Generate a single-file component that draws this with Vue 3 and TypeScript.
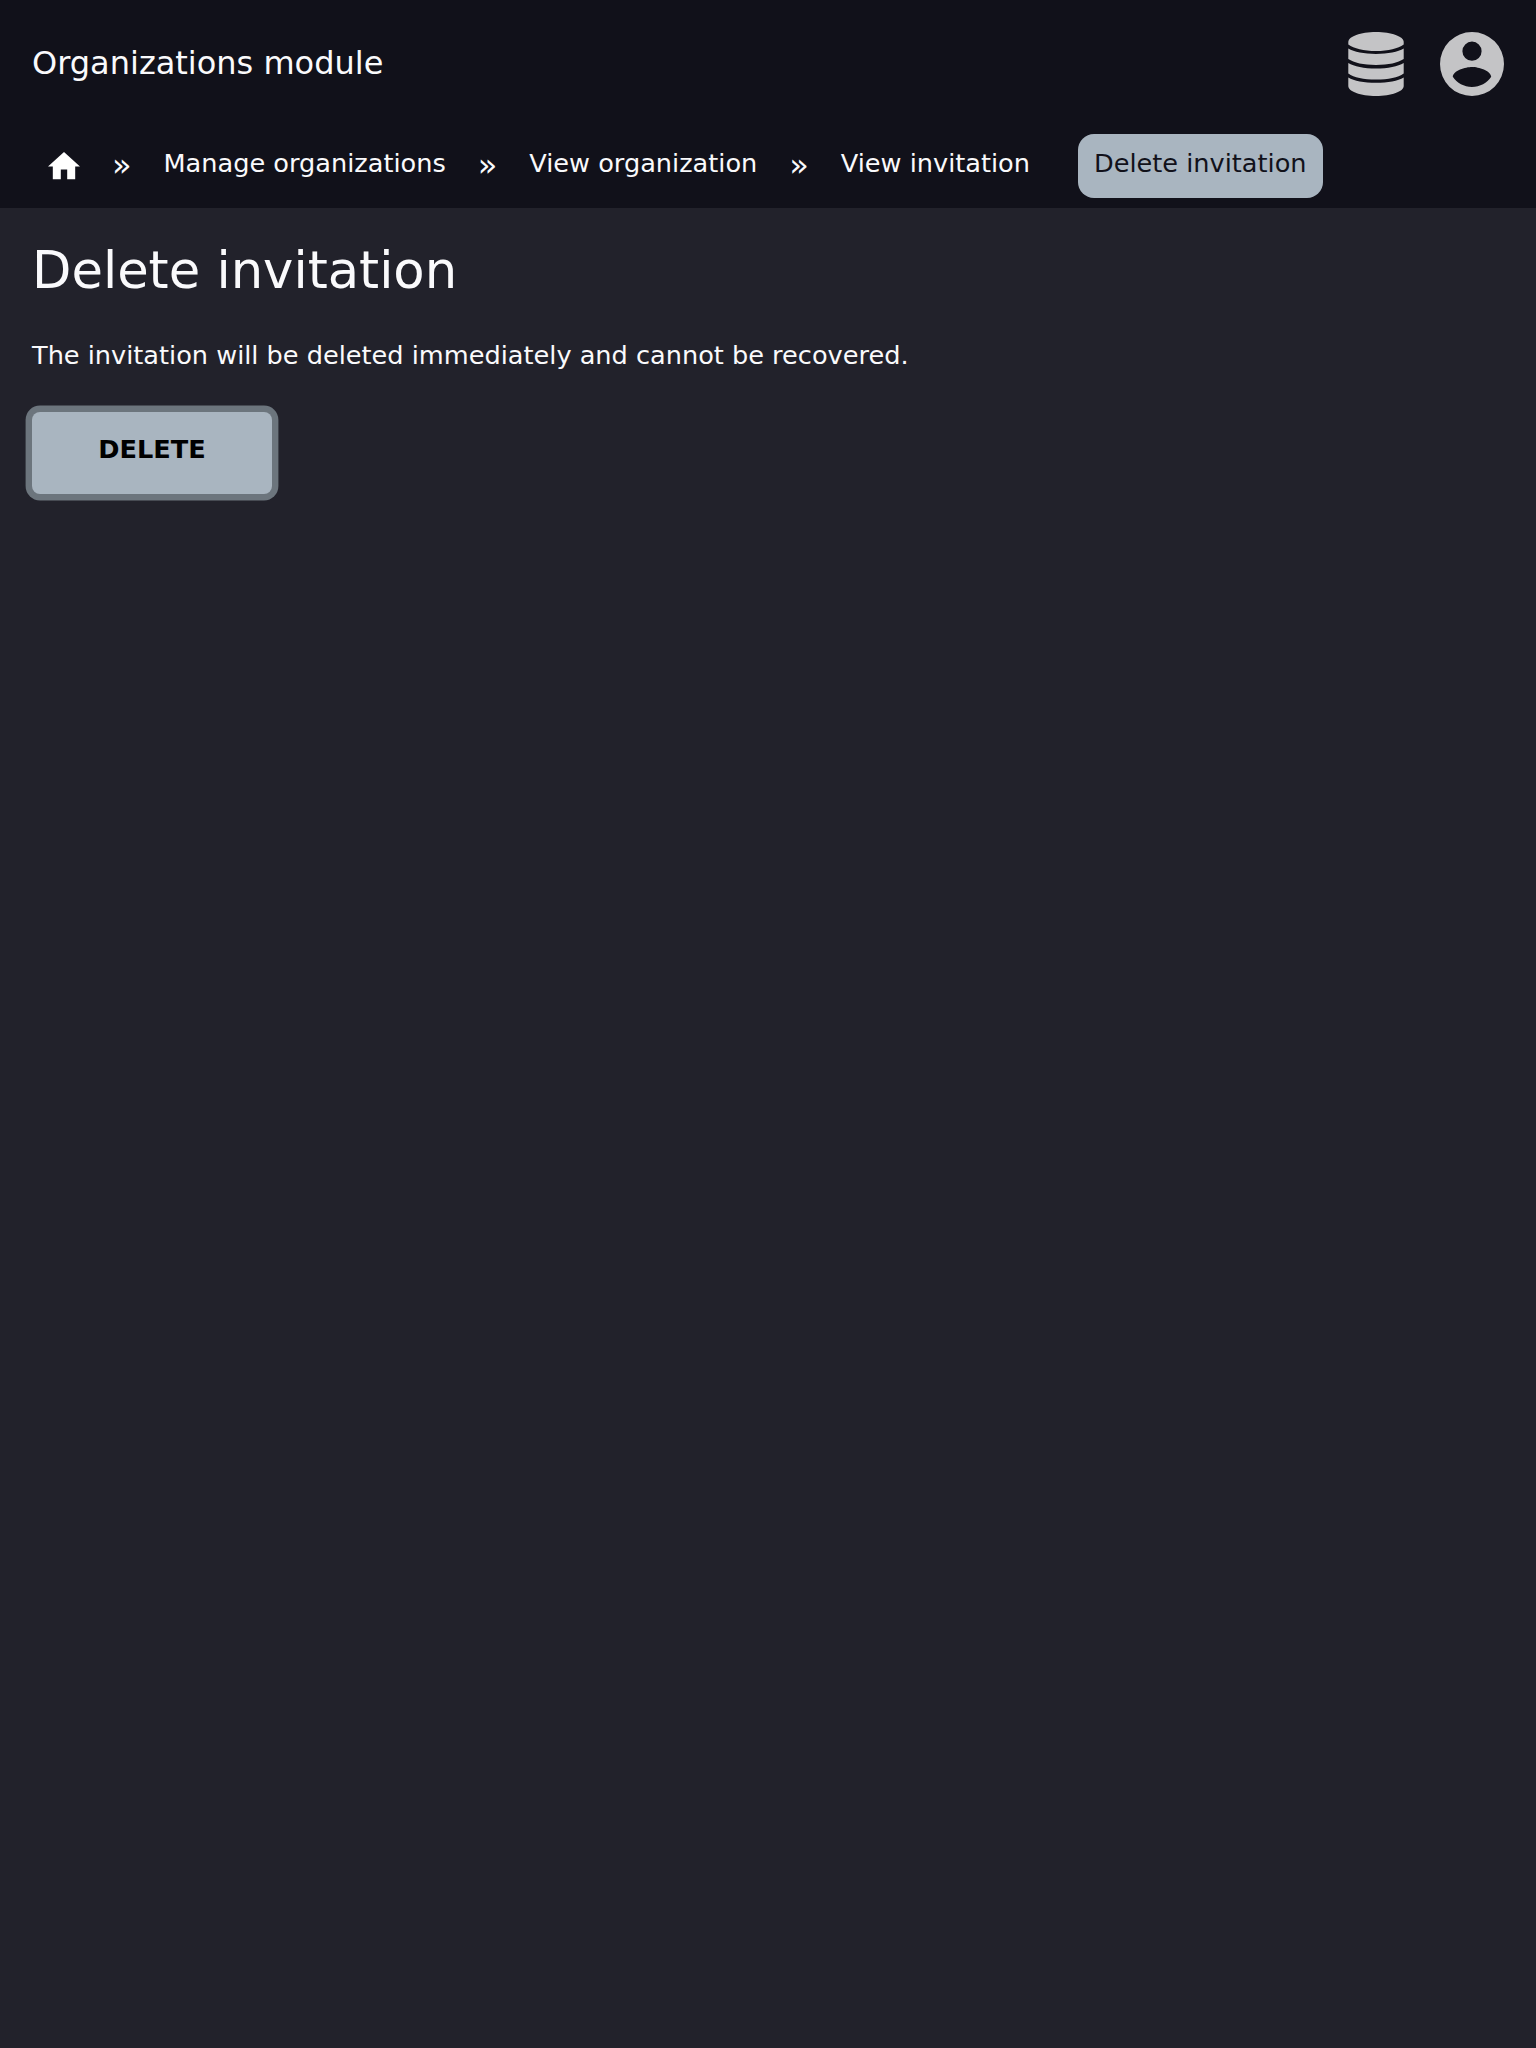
<script setup lang="ts">
interface Crumb {
  label: string
  current?: boolean
}

const moduleTitle = 'Organizations module'
const crumbs: Crumb[] = [
  { label: 'Manage organizations' },
  { label: 'View organization' },
  { label: 'View invitation' },
  { label: 'Delete invitation', current: true },
]
</script>

<template>
  <div class="page">
    <header class="header">
      <div class="bar">
        <div class="title">{{ moduleTitle }}</div>
        <div class="tools">
          <svg class="database" viewBox="0 0 56 64" aria-hidden="true">
            <path d="M28 0C43.500 0 55.700 4.500 55.700 10V12.500C50 16.500 40.500 19 28 19S6 16.500 .3 12.500V10C.3 4.500 12.500 0 28 0Z" />
            <path d="M.3 16.600C6 20 16 22 28 22S50 20 55.700 16.600V27.100C50 31 40.500 33 28 33S6 31 .3 27.100Z" />
            <path d="M.3 31C6 34.500 16 36.500 28 36.500S50 34.500 55.700 31V41.500C50 45.500 40.500 47.500 28 47.500S6 45.500 .3 41.500Z" />
            <path d="M.3 45.500C6 49 16 50.800 28 50.800S50 49 55.700 45.500V54C55.700 59.500 43.500 64 28 64S.3 59.500 .3 54Z" />
          </svg>
          <svg class="account" viewBox="2 2 20 20" aria-hidden="true">
            <path d="M12 19.200C9.500 19.200 7.290 17.920 6 16C6.030 14 10 12.900 12 12.900S17.970 14 18 16C16.710 17.920 14.500 19.200 12 19.200M12 5A3 3 0 0 1 15 8A3 3 0 0 1 12 11A3 3 0 0 1 9 8A3 3 0 0 1 12 5M12 2A10 10 0 0 0 2 12A10 10 0 0 0 12 22A10 10 0 0 0 22 12A10 10 0 0 0 12 2Z" />
          </svg>
        </div>
      </div>
      <nav class="crumbs">
        <a class="home" aria-label="Home">
          <svg viewBox="2 3 20 17" aria-hidden="true">
            <path d="M10 20v-6h4v6h5v-8h3L12 3 2 12h3v8z" />
          </svg>
        </a>
        <template v-for="crumb in crumbs" :key="crumb.label">
          <span v-if="!crumb.current" class="separator">»</span>
          <a class="crumb" :class="{ current: crumb.current }">{{ crumb.label }}</a>
        </template>
      </nav>
    </header>
    <main class="content">
      <h1>Delete invitation</h1>
      <p>The invitation will be deleted immediately and cannot be recovered.</p>
      <button type="button">DELETE</button>
    </main>
  </div>
</template>

<style>
body {
  margin: 0;
  background: #22222b;
}
</style>

<style scoped>
.page {
  min-height: 2048px;
  box-sizing: border-box;
  background: #22222b;
  color: #fafafc;
  font-family: "DejaVu Sans", sans-serif;
  font-size: 25.6px;
}
.header {
  height: 208px;
  background: #11111a;
}
.bar {
  height: 128px;
  padding: 0 32px;
  display: flex;
  align-items: center;
  justify-content: space-between;
}
.title {
  padding-bottom: 2px;
  font-size: 32px;
  line-height: 38px;
}
.tools {
  display: flex;
  gap: 36px;
}
.tools svg {
  display: block;
  height: 64px;
  fill: #c4c4c6;
}
.database {
  width: 56px;
}
.account {
  width: 64px;
}
.crumbs {
  display: flex;
  padding: 6px 32px 0;
}
.home {
  padding: 18.4px 16px 0;
}
.home svg {
  display: block;
  width: 32px;
  height: 27.2px;
  fill: #fff;
}
.separator {
  width: 51.5px;
  text-align: center;
  font-size: 32px;
  line-height: 62px;
}
.crumb {
  height: 64px;
  box-sizing: border-box;
  padding: 0 16px;
  line-height: 58px;
  white-space: nowrap;
}
.current {
  margin-left: 32px;
  border-radius: 16px;
  background: #a9b5c0;
  color: #11111a;
}
.content {
  padding: 32px;
}
h1 {
  margin: 0;
  font-size: 51.2px;
  font-weight: 400;
  line-height: 60px;
}
p {
  margin: 40px 0 42px;
  line-height: 30px;
}
button {
  display: block;
  width: 240px;
  height: 82px;
  padding: 0 0 8px;
  border: 0;
  border-radius: 8px;
  background: #a9b5c0;
  box-shadow: 0 0 0 6.4px #6c757d;
  color: #000;
  font: bold 25.6px/30px "DejaVu Sans", sans-serif;
}
</style>
